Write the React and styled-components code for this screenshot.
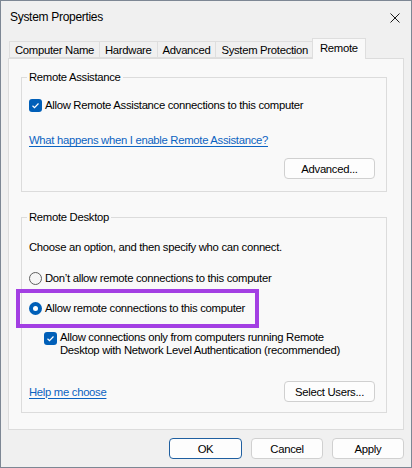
import styled, { createGlobalStyle } from "styled-components";

/** global */
const GlobalStyle = createGlobalStyle`
  html, body {
    margin: 0;
    padding: 0;
    background: #ffffff;
  }
  body {
    font-family: "Liberation Sans", Arial, sans-serif;
    font-size: 11.3px;
    letter-spacing: -0.3px;
    color: #000;
  }
  * {
    box-sizing: border-box;
  }
`;

/** window frame */
const Window = styled.div`
  width: 412px;
  height: 468px;
  border: 1px solid #7d8794;
  background: #f0f0f0;
  display: flex;
  flex-direction: column;
`;

const TitleBar = styled.div`
  height: 37px;
  display: flex;
  justify-content: space-between;
  align-items: flex-start;
  padding: 9px 11px 0 9px;
`;

const Title = styled.span`
  font-size: 12px;
  letter-spacing: -0.3px;
  line-height: 14px;
`;

const CloseIcon = styled.svg`
  width: 10px;
  height: 10px;
  margin-top: 3px;
`;

/** tabs */
const TabStrip = styled.div`
  height: 20px;
  display: flex;
  align-items: flex-end;
  padding-left: 8px;
  position: relative;
  z-index: 1;
`;

const Tab = styled.div`
  height: ${({ $active }) => ($active ? "21px" : "17px")};
  margin-bottom: ${({ $active }) => ($active ? "-1px" : "0")};
  margin-left: ${({ $active }) => ($active ? "-2px" : "-1px")};
  margin-right: ${({ $active }) => ($active ? "-1px" : "0")};
  padding: ${({ $active }) => ($active ? "0 7px 3px" : "0 5px")};
  display: flex;
  align-items: center;
  border: 1px solid #dedede;
  border-bottom: ${({ $active }) => ($active ? "none" : "1px solid #dedede")};
  background: ${({ $active }) => ($active ? "#f9f9f9" : "#f0f0f0")};
  position: relative;
  z-index: ${({ $active }) => ($active ? 2 : 1)};
  white-space: nowrap;

  &:first-child {
    margin-left: 0;
  }
`;

const Panel = styled.div`
  height: 372px;
  margin: 0 7px;
  border: 1px solid #dcdcdc;
  background: #f9f9f9;
  padding: 11px 16px 0 12px;
`;

/** group boxes */
const GroupBox = styled.fieldset`
  margin: ${({ $gap }) => $gap || "0"} 0 0 0;
  border: 1px solid #dcdcdc;
  padding: 0 11px ${({ $bottom }) => $bottom || "12px"} 7px;
  min-width: 0;
  display: flex;
  flex-direction: column;
`;

const Legend = styled.legend`
  padding: 0 2px;
  margin-left: -2px;
  line-height: 14px;
`;

const Line = styled.div`
  line-height: 14px;
  margin-top: ${({ $mt }) => $mt || "0"};
`;

const OptionRow = styled.label`
  display: flex;
  align-items: flex-start;
  gap: 3px;
  line-height: ${({ $lh }) => $lh || "14px"};
  margin-top: ${({ $mt }) => $mt || "0"};
  margin-left: ${({ $indent }) => $indent || "0"};
  position: relative;
`;

const CheckBox = styled.span`
  flex: none;
  width: 13px;
  height: 13px;
  margin-top: ${({ $offset }) => $offset || "0"};
  border-radius: 3px;
  background: #005fb8;
  display: flex;
  align-items: center;
  justify-content: center;
`;

const Radio = styled.span`
  flex: none;
  width: 13px;
  height: 13px;
  border-radius: 50%;
  margin-top: 1px;
  display: flex;
  align-items: center;
  justify-content: center;
  background: ${({ $checked }) => ($checked ? "#005fb8" : "#f6f6f6")};
  border: ${({ $checked }) => ($checked ? "none" : "1px solid #5f5f5f")};

  &::after {
    content: "";
    display: ${({ $checked }) => ($checked ? "block" : "none")};
    width: 5px;
    height: 5px;
    border-radius: 50%;
    background: #ffffff;
  }
`;

const Highlight = styled.span`
  position: absolute;
  left: -13px;
  top: -12px;
  width: 243px;
  height: 39px;
  border: 4px solid #a33fe3;
  pointer-events: none;
`;

const Link = styled.a`
  color: #0b63c1;
  text-decoration: underline;
  text-underline-offset: 2px;
  line-height: 14px;
  cursor: pointer;
`;

const LinkLine = styled.div`
  margin-top: ${({ $mt }) => $mt || "0"};
  line-height: 14px;
`;

const ActionRow = styled.div`
  display: flex;
  align-items: center;
  justify-content: ${({ $split }) => ($split ? "space-between" : "flex-end")};
  margin-top: ${({ $mt }) => $mt || "0"};
`;

const Button = styled.button`
  width: ${({ $w }) => $w || "91px"};
  height: 21px;
  padding: 0;
  font-family: inherit;
  font-size: 11.3px;
  letter-spacing: -0.3px;
  color: #000;
  background: #fdfdfd;
  border: 1px solid ${({ $primary }) => ($primary ? "#1f5fa0" : "#d0d0d0")};
  border-radius: 4px;
  cursor: pointer;
`;

const Footer = styled.div`
  display: flex;
  justify-content: flex-end;
  gap: 9px;
  padding: 8px 7px 0 0;
`;

const Check = () => (
  <svg width="9" height="9" viewBox="0 0 9 9">
    <path d="M1.5 4.8 L3.5 6.7 L7.5 2.5" fill="none" stroke="#fff" strokeWidth="1.2" />
  </svg>
);

/** render element */
export default function App() {
  return (
    <>
      <GlobalStyle />
      <Window>
        <TitleBar>
          <Title>System Properties</Title>
          <CloseIcon viewBox="0 0 10 10">
            <path d="M0.5 0.5 L9.5 9.5 M9.5 0.5 L0.5 9.5" stroke="#1a1a1a" strokeWidth="1" />
          </CloseIcon>
        </TitleBar>

        <TabStrip>
          <Tab>Computer Name</Tab>
          <Tab>Hardware</Tab>
          <Tab>Advanced</Tab>
          <Tab>System Protection</Tab>
          <Tab $active>Remote</Tab>
        </TabStrip>

        <Panel>
          <GroupBox>
            <Legend>Remote Assistance</Legend>
            <OptionRow $mt="14px">
              <CheckBox $offset="0.5px">
                <Check />
              </CheckBox>
              Allow Remote Assistance connections to this computer
            </OptionRow>
            <LinkLine $mt="21px">
              <Link>What happens when I enable Remote Assistance?</Link>
            </LinkLine>
            <ActionRow $mt="11px">
              <Button>Advanced...</Button>
            </ActionRow>
          </GroupBox>

          <GroupBox $gap="18px" $bottom="10px">
            <Legend>Remote Desktop</Legend>
            <Line $mt="16px">Choose an option, and then specify who can connect.</Line>
            <OptionRow $mt="17px">
              <Radio />
              Don’t allow remote connections to this computer
            </OptionRow>
            <OptionRow $mt="16px">
              <Radio $checked />
              Allow remote connections to this computer
              <Highlight />
            </OptionRow>
            <OptionRow $mt="16px" $indent="15px" $lh="13px">
              <CheckBox $offset="1px">
                <Check />
              </CheckBox>
              <span>
                Allow connections only from computers running Remote
                <br />
                Desktop with Network Level Authentication (recommended)
              </span>
            </OptionRow>
            <ActionRow $split $mt="24px">
              <Link>Help me choose</Link>
              <Button>Select Users...</Button>
            </ActionRow>
          </GroupBox>
        </Panel>

        <Footer>
          <Button $primary $w="73px">OK</Button>
          <Button $w="72px">Cancel</Button>
          <Button $w="72px">Apply</Button>
        </Footer>
      </Window>
    </>
  );
}
